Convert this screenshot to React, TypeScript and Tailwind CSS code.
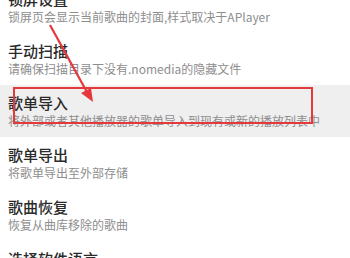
const items = [
  { title: '锁屏设置', desc: '锁屏页会显示当前歌曲的封面,样式取决于APlayer' },
  { title: '手动扫描', desc: '请确保扫描目录下没有.nomedia的隐藏文件' },
  { title: '歌单导入', desc: '将外部或者其他播放器的歌单导入到现有或新的播放列表中', active: true },
  { title: '歌单导出', desc: '将歌单导出至外部存储' },
  { title: '歌曲恢复', desc: '恢复从曲库移除的歌曲' },
  { title: '选择软件语言', desc: '' },
]

export default function App() {
  return (
    <div
      className="relative w-[350px] h-[258px] overflow-hidden bg-white"
      style={{ fontFamily: '"Noto Sans CJK SC", "Noto Sans", sans-serif' }}
    >
      <div className="-mt-[19px] flex flex-col">
        {items.map((item) => (
          <div
            key={item.title}
            className={`h-[52px] px-[8px] pt-[9px] ${item.active ? 'bg-[#efefef]' : ''}`}
          >
            <div className="text-[15px] leading-[18px] font-medium text-[#2a2a2a] whitespace-nowrap">{item.title}</div>
            <div className="mt-[1px] text-[12px] leading-[16px] text-[#8e8e8e] whitespace-nowrap">{item.desc}</div>
          </div>
        ))}
      </div>

      {/* annotation */}
      <div className="absolute left-[13px] top-[87px] w-[300px] h-[37px] border-2 border-[#e5383b]" />
      <svg className="absolute left-0 top-0" width="350" height="258" viewBox="0 0 350 258">
        <line x1="50" y1="25" x2="88" y2="94" stroke="#e5383b" strokeWidth="2.2" />
        <polygon points="93,102 81,93 91,88" fill="#e5383b" />
      </svg>
    </div>
  )
}
